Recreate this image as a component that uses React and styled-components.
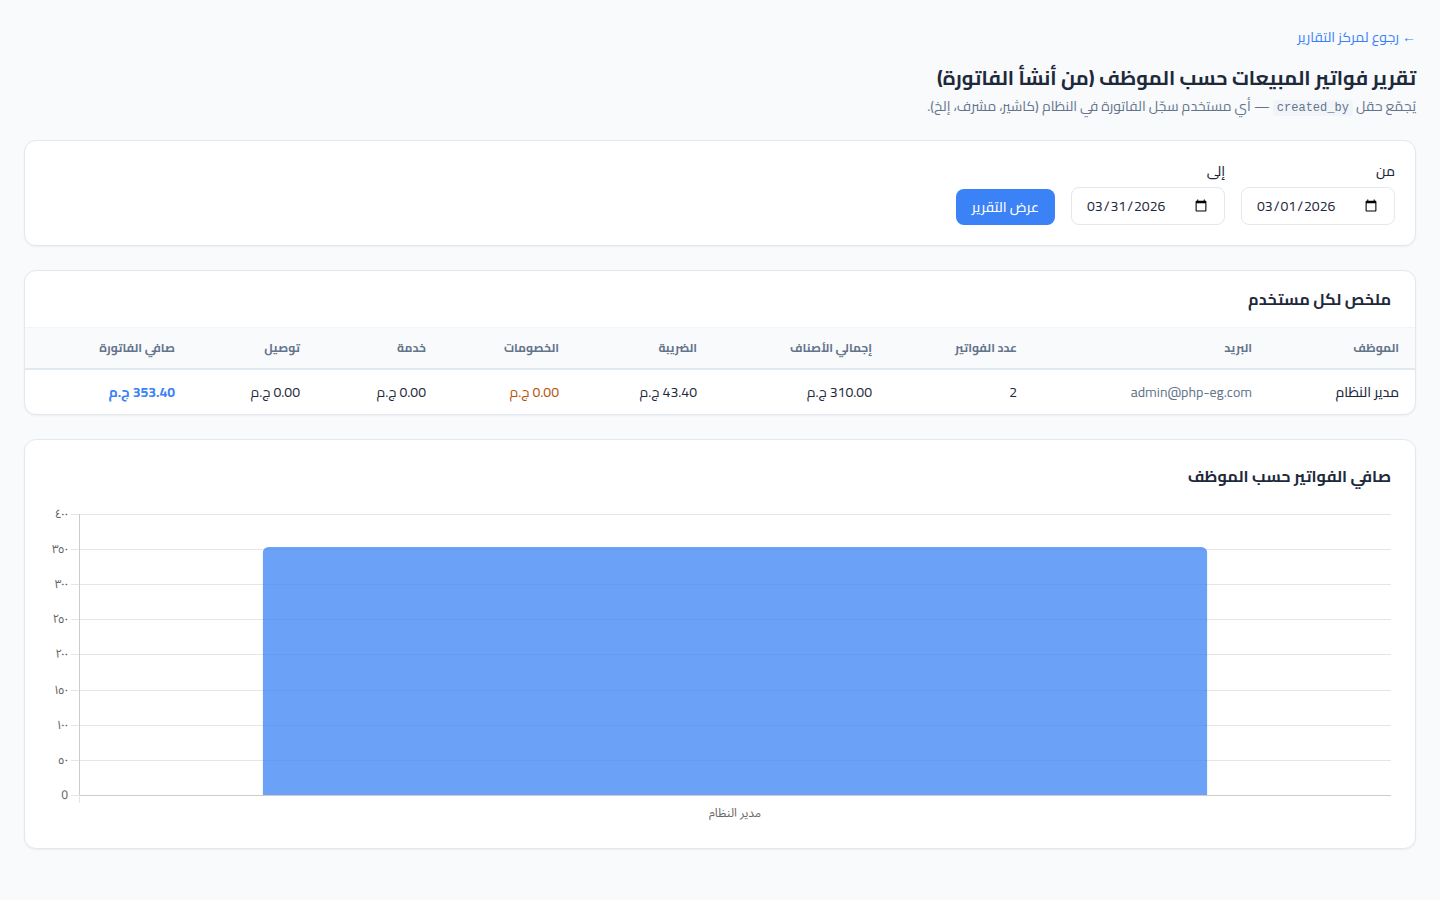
import styled, { createGlobalStyle } from "styled-components";

const GlobalStyle = createGlobalStyle`
    * {
        box-sizing: border-box;
    }

    body {
        margin: 0;
        background-color: #f8fafc;
        color: #1e293b;
        font-family: Cairo, "Liberation Sans", sans-serif;
        font-size: 14px;
        line-height: 24px;
    }
`;

const Page = styled.main`
    display: flex;
    flex-direction: column;
    gap: 24px;
    padding: 24px;
`;

const Header = styled.header`
    display: flex;
    flex-direction: column;
    align-items: flex-start;
`;

const BackLink = styled.a`
    margin-bottom: 14px;
    line-height: 26px;
    color: #3b82f6;
    text-decoration: none;
`;

const Title = styled.h1`
    margin: 0;
    font-size: 20px;
    font-weight: 700;
    line-height: 28px;
`;

const Subtitle = styled.p`
    margin: 4px 0 0;
    color: #64748b;
    line-height: 20px;
`;

const Code = styled.code`
    padding: 1px 4px;
    border-radius: 4px;
    background-color: #f1f5f9;
    font-family: "Liberation Mono", monospace;
    font-size: 12px;
    line-height: 12px;
`;

const Card = styled.section`
    overflow: hidden;
    border: 1px solid #e2e8f0;
    border-radius: 12px;
    background-color: white;
    box-shadow: 0 1px 2px rgba(0, 0, 0, 0.05);
`;

const Filters = styled.form`
    display: flex;
    flex-wrap: wrap;
    align-items: flex-end;
    gap: 16px;
    padding: 20px;
`;

const Field = styled.div`
    display: flex;
    flex-direction: column;
    gap: 6px;
`;

const Label = styled.label`
    font-weight: 500;
    line-height: 20px;
`;

const DateInput = styled.input`
    width: 154px;
    height: 38px;
    padding: 0 14px;
    border: 1px solid #e2e8f0;
    border-radius: 8px;
    background-color: white;
    color: #1e293b;
    direction: ltr;
    font-family: inherit;
    font-size: 14px;
`;

const Button = styled.button`
    height: 36px;
    padding: 0 16px;
    border: none;
    border-radius: 8px;
    background-color: #3b82f6;
    color: white;
    cursor: pointer;
    font-family: inherit;
    font-size: 14px;
    font-weight: 500;
`;

const CardTitle = styled.h2`
    margin: 0;
    padding: 16px 24px;
    font-size: 16px;
    font-weight: 700;
    line-height: 24px;
`;

const Table = styled.table`
    width: 100%;
    border-collapse: separate;
    border-spacing: 0;
    table-layout: fixed;
`;

const Col = styled.col`
    width: ${(props) => props.$width}px;
`;

const Th = styled.th`
    height: 43px;
    padding: 0 16px;
    border-top: 1px solid #f1f5f9;
    border-bottom: 2px solid #e2e8f0;
    background-color: #f8fafc;
    color: #64748b;
    font-size: 12px;
    font-weight: 700;
    text-align: start;
    white-space: nowrap;
`;

const Td = styled.td`
    height: 44px;
    padding: 0 16px;
    color: ${(props) => props.$color || "inherit"};
    font-weight: ${(props) => props.$weight || 400};
    white-space: nowrap;
`;

const ChartCard = styled(Card)`
    padding: 8px 0 16px;

    ${CardTitle} {
        padding-bottom: 20px;
    }
`;

const Chart = styled.div`
    display: flex;
    direction: ltr;
    padding: 0 24px;
`;

const Axis = styled.svg`
    display: block;
    flex: none;
    width: 30px;
    height: 324px;
    overflow: visible;
`;

const Plot = styled.svg`
    display: block;
    flex: 1;
    min-width: 0;
    height: 324px;
`;

const ChartText = styled.text`
    fill: #666;
    font-family: "Noto Sans Arabic UI", "Open Sans", sans-serif;
    font-size: 12px;
`;

const columns = [
  { name: "الموظف", width: 147 },
  { name: "البريد", width: 235 },
  { name: "عدد الفواتير", width: 145 },
  { name: "إجمالي الأصناف", width: 175 },
  { name: "الضريبة", width: 138 },
  { name: "الخصومات", width: 133 },
  { name: "خدمة", width: 126 },
  { name: "توصيل", width: 125 },
  { name: "صافي الفاتورة", width: 166 },
];

const ticks = ["٤٠٠", "٣٥٠", "٣٠٠", "٢٥٠", "٢٠٠", "١٥٠", "١٠٠", "٥٠", "0"];

const TOP = 6;
const HEIGHT = 281;
// half a pixel keeps the 1px lines sharp
const tickY = (i) => TOP + Math.ceil((i * HEIGHT) / 8 - 0.5) + 0.5;
const barHeight = Math.round((353.4 / 400) * HEIGHT);

const SalesChart = () => {
  return (
    <Chart>
        <Axis>
            {ticks.map((tick, i) => (
                <g key={tick}>
                    <ChartText x="19" y={tickY(i) + 3} textAnchor="end">{tick}</ChartText>
                    <line x1="22" x2="30" y1={tickY(i)} y2={tickY(i)} stroke="#e5e5e5" />
                </g>
            ))}
        </Axis>
        <Plot>
            {ticks.map((tick, i) => (
                <line key={tick} x1="0" x2="100%" y1={tickY(i)} y2={tickY(i)} stroke={tick === "0" ? "#ccc" : "#e5e5e5"} />
            ))}
            <line x1="0.5" x2="0.5" y1={TOP} y2={TOP + HEIGHT} stroke="#ccc" />
            <line x1="0.5" x2="0.5" y1={TOP + HEIGHT} y2={TOP + HEIGHT + 8} stroke="#e5e5e5" />
            <svg x="14%" y={TOP} width="72%" height={HEIGHT}>
                <rect x="0" y={HEIGHT - barHeight} width="100%" height={barHeight + 10} rx="6" fill="#3b82f6" fillOpacity="0.75" />
            </svg>
            <ChartText x="50%" y={TOP + HEIGHT + 22} textAnchor="middle">مدير النظام</ChartText>
        </Plot>
    </Chart>
  );
};

const App = () => {
  return (
    <>
        <GlobalStyle />
        <Page dir="rtl" lang="ar">
            <Header>
                <BackLink href="#reports">← رجوع لمركز التقارير</BackLink>
                <Title>تقرير فواتير المبيعات حسب الموظف (من أنشأ الفاتورة)</Title>
                <Subtitle>
                    يُجمّع حقل <Code>created_by</Code> — أي مستخدم سجّل الفاتورة في النظام (كاشير، مشرف، إلخ).
                </Subtitle>
            </Header>
            <Card>
                <Filters>
                    <Field>
                        <Label htmlFor="from">من</Label>
                        <DateInput id="from" type="date" defaultValue="2026-03-01" />
                    </Field>
                    <Field>
                        <Label htmlFor="to">إلى</Label>
                        <DateInput id="to" type="date" defaultValue="2026-03-31" />
                    </Field>
                    <Button type="button">عرض التقرير</Button>
                </Filters>
            </Card>
            <Card>
                <CardTitle>ملخص لكل مستخدم</CardTitle>
                <Table>
                    <colgroup>
                        {columns.map((column) => (
                            <Col key={column.name} $width={column.width} />
                        ))}
                    </colgroup>
                    <thead>
                        <tr>
                            {columns.map((column) => (
                                <Th key={column.name} scope="col">{column.name}</Th>
                            ))}
                        </tr>
                    </thead>
                    <tbody>
                        <tr>
                            <Td $weight={500}>مدير النظام</Td>
                            <Td $color="#64748b">admin@php-eg.com</Td>
                            <Td>2</Td>
                            <Td>310.00 ج.م</Td>
                            <Td>43.40 ج.م</Td>
                            <Td $color="#b45309">0.00 ج.م</Td>
                            <Td>0.00 ج.م</Td>
                            <Td>0.00 ج.م</Td>
                            <Td $color="#3b82f6" $weight={700}>353.40 ج.م</Td>
                        </tr>
                    </tbody>
                </Table>
            </Card>
            <ChartCard>
                <CardTitle>صافي الفواتير حسب الموظف</CardTitle>
                <SalesChart />
            </ChartCard>
        </Page>
    </>
  );
};

export default App;
